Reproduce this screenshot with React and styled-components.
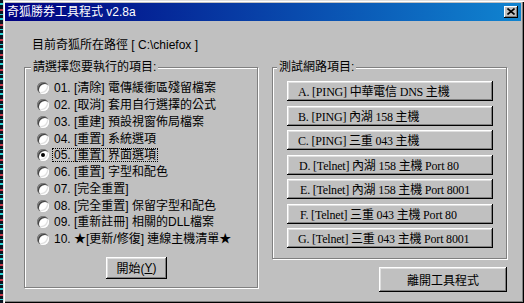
import React from 'react';
import styled, { createGlobalStyle } from 'styled-components';

const Global = createGlobalStyle`
  html, body { margin: 0; padding: 0; }
  body {
    width: 524px;
    height: 303px;
    overflow: hidden;
    background: repeating-linear-gradient(180deg,
      #0c1420 0 3px, #2ad4d4 3px 5px, #0c1420 5px 9px, #c83a4a 9px 11px, #0c1420 11px 14px, #2ad4d4 14px 15px);
    font-family: "Liberation Sans", "Noto Sans CJK TC", sans-serif;
    font-size: 12px;
    color: #000;
  }
`;

const Desktop = styled.div`
  display: flex;
  height: 303px;
  padding-left: 3px;
  box-sizing: border-box;
`;

const Window = styled.div`
  width: 521px;
  height: 303px;
  box-sizing: border-box;
  padding: 3px 3px 2px 2px;
  background: #c0c0c0;
  box-shadow: inset 1px 1px 0 #dfdfdf, inset 2px 2px 0 #fff,
    inset -1px -1px 0 #000, inset -2px -2px 0 #808080;
  display: flex;
  flex-direction: column;
`;

const TitleBar = styled.div`
  height: 18px;
  flex: none;
  display: flex;
  align-items: center;
  justify-content: space-between;
  padding: 0 3px 0 2px;
  background: linear-gradient(90deg, #000080, #1084d0);
  color: #fff;
`;

const TitleText = styled.span`
  font-size: 12px;
  line-height: 14px;
  white-space: pre;
`;

const CloseBtn = styled.div`
  width: 14px;
  height: 12px;
  margin-top: -1px;
  box-sizing: border-box;
  background: #c0c0c0;
  box-shadow: inset -1px -1px 0 #000, inset 1px 1px 0 #fff, inset -2px -2px 0 #808080;
  display: flex;
  align-items: center;
  justify-content: center;
  padding: 0 1px 1px 0;
`;

const Body = styled.div`
  flex: 1;
  display: flex;
  flex-direction: column;
  padding: 17px 0 0 19px;
`;

const PathLine = styled.div`
  margin-left: 8px;
  height: 14px;
  line-height: 14px;
  white-space: pre;
`;

const Columns = styled.div`
  display: flex;
  gap: 14px;
  margin-top: 8px;
  align-items: flex-start;
`;

const Group = styled.fieldset`
  margin: 0;
  padding: 0;
  min-width: 0;
  box-sizing: border-box;
  width: ${(p) => p.$w}px;
  height: ${(p) => p.$h}px;
  border: 1px solid #808080;
  box-shadow: inset 1px 1px 0 #fff, 1px 1px 0 #fff;
`;

const Legend = styled.legend`
  margin-left: ${(p) => p.$ml}px;
  padding: 0 2px;
  height: 14px;
  line-height: 14px;
  background: #c0c0c0;
  white-space: pre;
`;

const LeftInner = styled.div`
  display: flex;
  flex-direction: column;
  padding: 6px 0 0 12px;
`;

const Option = styled.div`
  height: 16.75px;
  display: flex;
  align-items: center;
  gap: 3px;
`;

const Radio = styled.span`
  position: relative;
  width: 12px;
  height: 12px;
  flex: none;
  border-radius: 50%;
  background: #fff;
  box-shadow: inset 1px 1px 0 #808080, inset 2px 2px 0 #404040,
    inset -1px -1px 0 #fff, inset -2px -2px 0 #dfdfdf;
  display: flex;
  align-items: center;
  justify-content: center;
  &::after {
    content: "";
    width: 4px;
    height: 4px;
    border-radius: 50%;
    background: ${(p) => (p.$checked ? '#000' : 'transparent')};
  }
`;

const OptionLabel = styled.span`
  line-height: 12px;
  padding: 0 1px;
  border: 1px dotted ${(p) => (p.$focus ? '#000' : 'transparent')};
  white-space: pre;
`;

const RaisedButton = styled.button`
  box-sizing: border-box;
  margin: 0;
  padding: 0;
  background: #c0c0c0;
  border: none;
  color: #000;
  font: inherit;
  box-shadow: inset -1px -1px 0 #000, inset 1px 1px 0 #fff,
    inset -2px -2px 0 #808080, inset 2px 2px 0 #dfdfdf;
  display: flex;
  align-items: center;
  justify-content: center;
  white-space: pre;
`;

const StartButton = styled(RaisedButton)`
  width: 61px;
  height: 22px;
  margin-top: 9px;
  margin-left: 69px;
  u { text-decoration: underline; }
`;

const RightColumn = styled.div`
  display: flex;
  flex-direction: column;
  width: 235px;
`;

const RightInner = styled.div`
  display: flex;
  flex-direction: column;
  gap: 4.5px;
  padding: 7px 0 0 14px;
`;

const NetButton = styled(RaisedButton)`
  width: 206px;
  height: 20px;
  justify-content: flex-start;
  padding-left: ${(p) => p.$pl}px;
  font-family: "Liberation Serif", "Noto Sans CJK TC", serif;
  font-size: 12px;
  letter-spacing: -0.2px;
`;

const ExitButton = styled(RaisedButton)`
  width: 128px;
  height: 25px;
  margin-top: 8px;
  align-self: flex-end;
  font-size: 12px;
`;

const options = [
  '01. [清除] 電傳緩衝區殘留檔案',
  '02. [取消] 套用自行選擇的公式',
  '03. [重建] 預設視窗佈局檔案',
  '04. [重置] 系統選項',
  '05. [重置] 界面選項',
  '06. [重置] 字型和配色',
  '07. [完全重置]',
  '08. [完全重置] 保留字型和配色',
  '09. [重新註冊] 相關的DLL檔案',
  '10. ★[更新/修復] 連線主機清單★',
];

const netItems = [
  ['A. [PING] 中華電信 DNS 主機', 11],
  ['B. [PING] 內湖 158 主機', 11],
  ['C. [PING] 三重 043 主機', 11],
  ['D. [Telnet] 內湖 158 主機 Port 80', 12],
  ['E. [Telnet] 內湖 158 主機 Port 8001', 13],
  ['F. [Telnet] 三重 043 主機 Port 80', 13],
  ['G. [Telnet] 三重 043 主機 Port 8001', 11],
];

export default function App() {
  return (
    <>
      <Global />
      <Desktop>
        <Window>
          <TitleBar>
            <TitleText>奇狐勝券工具程式 v2.8a</TitleText>
            <CloseBtn>
              <svg width="8" height="7" viewBox="0 0 8 7">
                <path d="M0.5 0.5 L7.5 6.5 M7.5 0.5 L0.5 6.5" stroke="#000" strokeWidth="1.6" fill="none" />
              </svg>
            </CloseBtn>
          </TitleBar>
          <Body>
            <PathLine>目前奇狐所在路徑 [ C:\chiefox ]</PathLine>
            <Columns>
              <Group $w={234} $h={228}>
                <Legend $ml={6}>請選擇您要執行的項目:</Legend>
                <LeftInner>
                  {options.map((o, i) => (
                    <Option key={o}>
                      <Radio $checked={i === 4} />
                      <OptionLabel $focus={i === 4}>{o}</OptionLabel>
                    </Option>
                  ))}
                  <StartButton>
                    開始(<u>Y</u>)
                  </StartButton>
                </LeftInner>
              </Group>
              <RightColumn>
                <Group $w={235} $h={199}>
                  <Legend $ml={4}>測試網路項目:</Legend>
                  <RightInner>
                    {netItems.map(([t, pl]) => (
                      <NetButton key={t} $pl={pl}>
                        {t}
                      </NetButton>
                    ))}
                  </RightInner>
                </Group>
                <ExitButton>離開工具程式</ExitButton>
              </RightColumn>
            </Columns>
          </Body>
        </Window>
      </Desktop>
    </>
  );
}
